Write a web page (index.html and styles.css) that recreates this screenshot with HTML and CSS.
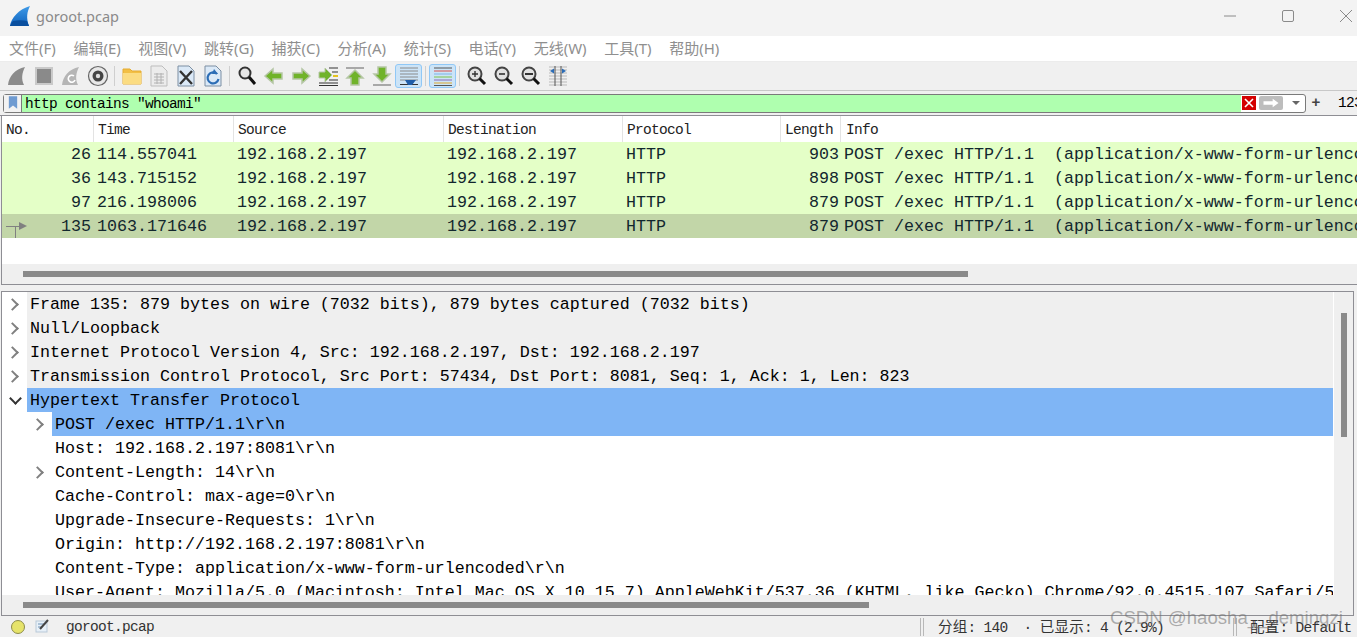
FILE: index.html
```html
<!DOCTYPE html>
<html lang="zh">
<head>
<meta charset="utf-8">
<title>goroot.pcap</title>
<link rel="stylesheet" href="styles.css">
</head>
<body>
<div class="window">
  <header class="titlebar">
    <svg class="logo" viewBox="0 0 20 20"><defs><linearGradient id="fin" x1="0" y1="0" x2="0" y2="1"><stop offset="0" stop-color="#3f9be8"/><stop offset="1" stop-color="#0f62bd"/></linearGradient></defs><path d="M0 20C1 12 9 3 20 0C17 6 16 12 19 20Z" fill="url(#fin)"/><path d="M0 20C1 18 2 16 3 15C8 14 13 14 17 15L19 20Z" fill="#0a4f9f"/></svg>
    <span class="title">goroot.pcap</span>
    <div class="winctl">
      <svg class="ctl" viewBox="0 0 12 12"><path d="M0 6H12" stroke="#8a8a8a" fill="none"/></svg>
      <svg class="ctl" viewBox="0 0 12 12"><rect x=".5" y=".5" width="11" height="11" rx="1.5" stroke="#8a8a8a" fill="none"/></svg>
      <svg class="ctl" viewBox="0 0 12 12"><path d="M0 0L12 12M12 0L0 12" stroke="#8a8a8a" fill="none"/></svg>
    </div>
  </header>
  <nav class="menubar">
    <span>文件(F)</span><span>编辑(E)</span><span>视图(V)</span><span>跳转(G)</span><span>捕获(C)</span><span>分析(A)</span><span>统计(S)</span><span>电话(Y)</span><span>无线(W)</span><span>工具(T)</span><span>帮助(H)</span>
  </nav>
  <div class="toolbar">
    <i class="tb"><svg viewBox="0 0 22 22"><path d="M2 20C3 11 9 4 19 2C16 8 15 14 18 20Z" fill="#8b8b8b"/></svg></i>
    <i class="tb"><svg viewBox="0 0 22 22"><rect x="3" y="3" width="16" height="16" fill="#8a8a8a" stroke="#c9c9c9" stroke-width="2"/></svg></i>
    <i class="tb"><svg viewBox="0 0 22 22"><path d="M2 20C3 11 9 4 19 2C16 8 15 14 18 20Z" fill="#b5b5b5"/><path d="M14 11a3.5 3.5 0 1 0 1 4" fill="none" stroke="#fff" stroke-width="1.6"/></svg></i>
    <i class="tb"><svg viewBox="0 0 22 22"><circle cx="11" cy="11" r="9.5" fill="#e8e8e8" stroke="#666" stroke-width="1.2"/><circle cx="11" cy="11" r="5.5" fill="#444"/><circle cx="11" cy="11" r="2.2" fill="#ddd"/></svg></i>
    <b class="sep"></b>
    <i class="tb"><svg viewBox="0 0 22 22"><path d="M2 4H9L11 6H20V19H2Z" fill="#f2bf45" stroke="#e5ac33"/><path d="M2 8H20V19H2Z" fill="#fbdc82"/></svg></i>
    <i class="tb"><svg viewBox="0 0 22 22"><path d="M3 1H14L19 6V21H3Z" fill="#ececec" stroke="#bdbdbd"/><path d="M6 9H16M6 12H16M6 15H16M6 18H16M9 8V19M13 8V19" stroke="#b2b2b2" fill="none"/></svg></i>
    <i class="tb"><svg viewBox="0 0 22 22"><path d="M3 1H14L19 6V21H3Z" fill="#dbe9f7" stroke="#7c8fa3"/><path d="M5 6L17 19M17 6L5 19" stroke="#333" stroke-width="2.4" fill="none"/></svg></i>
    <i class="tb"><svg viewBox="0 0 22 22"><path d="M3 1H14L19 6V21H3Z" fill="#dbe9f7" stroke="#7c8fa3"/><path d="M15 9A5.5 5.5 0 1 0 16.500 14" fill="none" stroke="#2c6db5" stroke-width="2.2"/><path d="M12 4L16 9L10 9Z" fill="#2c6db5"/></svg></i>
    <b class="sep"></b>
    <i class="tb"><svg viewBox="0 0 22 22"><circle cx="9" cy="8" r="5.5" fill="#e6e6e6" stroke="#333" stroke-width="2"/><path d="M13 12L19 19" stroke="#111" stroke-width="3" fill="none"/></svg></i>
    <i class="tb"><svg viewBox="0 0 22 22"><path d="M2 11L10 4V8H19V14H10V18Z" fill="#70b32a" stroke="#b5c6a5" stroke-width="1.5"/></svg></i>
    <i class="tb"><svg viewBox="0 0 22 22"><path d="M20 11L12 4V8H3V14H12V18Z" fill="#70b32a" stroke="#b5c6a5" stroke-width="1.5"/></svg></i>
    <i class="tb"><svg viewBox="0 0 22 22"><path d="M12 3H21M15 7H21M12 15H21M2 18H21M2 20.500H21" stroke="#333" fill="none"/><path d="M15 10L8 3V7H2V13H8V17Z" fill="#70b32a" stroke="#b5c6a5"/><path d="M16 11H21" stroke="#e5c21f" stroke-width="2"/></svg></i>
    <i class="tb"><svg viewBox="0 0 22 22"><path d="M2 3H20" stroke="#a8a8a8" stroke-width="2"/><path d="M11 5L19 13H15V20H7V13H3Z" fill="#70b32a" stroke="#b5c6a5" stroke-width="1.5"/></svg></i>
    <i class="tb"><svg viewBox="0 0 22 22"><path d="M2 20H20" stroke="#a8a8a8" stroke-width="2"/><path d="M11 17L19 9H15V2H7V9H3Z" fill="#70b32a" stroke="#b5c6a5" stroke-width="1.5"/></svg></i>
    <i class="tb on"><svg viewBox="0 0 22 22"><path d="M2 3H20M2 6H20M2 9H20M2 12H20M2 15H20" stroke="#8a8a8a" fill="none"/><path d="M2 19.500H20" stroke="#333" fill="none"/><path d="M7 15H18L14 20H10Z" fill="#1f5da8"/></svg></i>
    <b class="sep"></b>
    <i class="tb on"><svg viewBox="0 0 22 22"><path d="M2 3H20" stroke="#555"/><path d="M2 6H20" stroke="#d9534f"/><path d="M2 9H20" stroke="#7db4e6"/><path d="M2 12H20" stroke="#7fc24b"/><path d="M2 15H20" stroke="#8a6bb5"/><path d="M2 18H20" stroke="#e0a92f"/><path d="M2 20.500H20" stroke="#555"/></svg></i>
    <b class="sep"></b>
    <i class="tb"><svg viewBox="0 0 22 22"><circle cx="9" cy="9" r="6.500" fill="#e2e2e2" stroke="#444" stroke-width="2"/><path d="M6 9H12M9 6V12" stroke="#333" stroke-width="1.4"/><path d="M13.500 13.500L19 19" stroke="#111" stroke-width="3"/></svg></i>
    <i class="tb"><svg viewBox="0 0 22 22"><circle cx="9" cy="9" r="6.500" fill="#e2e2e2" stroke="#444" stroke-width="2"/><path d="M6 9H12" stroke="#333" stroke-width="1.6"/><path d="M13.500 13.500L19 19" stroke="#111" stroke-width="3"/></svg></i>
    <i class="tb"><svg viewBox="0 0 22 22"><circle cx="9" cy="9" r="6.500" fill="#e2e2e2" stroke="#444" stroke-width="2"/><path d="M5 8H13V10H5Z" fill="#333"/><path d="M13.500 13.500L19 19" stroke="#111" stroke-width="3"/></svg></i>
    <i class="tb"><svg viewBox="0 0 22 22"><path d="M2 2H20M2 5H20M2 8H20M2 11H20M2 14H20M2 17H20M2 20H20" stroke="#b9b9b9"/><path d="M8 1V21M14 1V21" stroke="#555" fill="none"/><path d="M3 6L7 3.500V8.500ZM19 6L15 3.500V8.500Z" fill="#2a6cb8"/></svg></i>
  </div>
  <div class="filterbar">
    <div class="filter">
      <span class="bookmark"><svg viewBox="0 0 12 16"><path d="M1 0H11V15L6 11L1 15Z" fill="#6f9bd1"/></svg></span>
      <span class="expr">http contains "whoami"</span>
      <span class="clear"><svg viewBox="0 0 14 14"><path d="M3 3L11 11M11 3L3 11" stroke="#fff" stroke-width="1.6"/></svg></span>
      <span class="apply"><svg viewBox="0 0 20 12"><path d="M1 4H12V1L19 6L12 11V8H1Z" fill="#fff"/></svg></span>
      <span class="drop"></span>
    </div>
    <span class="plus">+</span>
    <span class="btn123">123</span>
  </div>

  <section class="packets">
    <div class="phead">
      <span class="c1">No.</span><span class="c2">Time</span><span class="c3">Source</span><span class="c4">Destination</span><span class="c5">Protocol</span><span class="c6">Length</span><span class="c7">Info</span>
    </div>
    <div class="prow"><span class="c1">26</span><span class="c2">114.557041</span><span class="c3">192.168.2.197</span><span class="c4">192.168.2.197</span><span class="c5">HTTP</span><span class="c6">903</span><span class="c7">POST /exec HTTP/1.1  (application/x-www-form-urlencoded)</span></div>
    <div class="prow"><span class="c1">36</span><span class="c2">143.715152</span><span class="c3">192.168.2.197</span><span class="c4">192.168.2.197</span><span class="c5">HTTP</span><span class="c6">898</span><span class="c7">POST /exec HTTP/1.1  (application/x-www-form-urlencoded)</span></div>
    <div class="prow"><span class="c1">97</span><span class="c2">216.198006</span><span class="c3">192.168.2.197</span><span class="c4">192.168.2.197</span><span class="c5">HTTP</span><span class="c6">879</span><span class="c7">POST /exec HTTP/1.1  (application/x-www-form-urlencoded)</span></div>
    <div class="prow sel"><svg class="rel" viewBox="0 0 24 24"><path d="M2 12.500H16M11.500 13V24" stroke="#808080" fill="none"/><path d="M15 8L23 12L15 16Z" fill="#808080"/></svg><span class="c1">135</span><span class="c2">1063.171646</span><span class="c3">192.168.2.197</span><span class="c4">192.168.2.197</span><span class="c5">HTTP</span><span class="c6">879</span><span class="c7">POST /exec HTTP/1.1  (application/x-www-form-urlencoded)</span></div>
    <div class="pfill"></div>
    <div class="hscroll"><span class="thumb t1"></span></div>
  </section>

  <section class="details">
    <div class="dbody">
      <div class="tree">
        <div class="node grey"><i class="arrow"></i><span class="lab">Frame 135: 879 bytes on wire (7032 bits), 879 bytes captured (7032 bits)</span></div>
        <div class="node grey"><i class="arrow"></i><span class="lab">Null/Loopback</span></div>
        <div class="node grey"><i class="arrow"></i><span class="lab">Internet Protocol Version 4, Src: 192.168.2.197, Dst: 192.168.2.197</span></div>
        <div class="node grey"><i class="arrow"></i><span class="lab">Transmission Control Protocol, Src Port: 57434, Dst Port: 8081, Seq: 1, Ack: 1, Len: 823</span></div>
        <div class="node hl"><i class="arrow open"></i><span class="lab">Hypertext Transfer Protocol</span></div>
        <div class="node sub hl"><i class="arrow"></i><span class="lab">POST /exec HTTP/1.1\r\n</span></div>
        <div class="node sub"><i class="noarrow"></i><span class="lab">Host: 192.168.2.197:8081\r\n</span></div>
        <div class="node sub"><i class="arrow"></i><span class="lab">Content-Length: 14\r\n</span></div>
        <div class="node sub"><i class="noarrow"></i><span class="lab">Cache-Control: max-age=0\r\n</span></div>
        <div class="node sub"><i class="noarrow"></i><span class="lab">Upgrade-Insecure-Requests: 1\r\n</span></div>
        <div class="node sub"><i class="noarrow"></i><span class="lab">Origin: http://192.168.2.197:8081\r\n</span></div>
        <div class="node sub"><i class="noarrow"></i><span class="lab">Content-Type: application/x-www-form-urlencoded\r\n</span></div>
        <div class="node sub"><i class="noarrow"></i><span class="lab">User-Agent: Mozilla/5.0 (Macintosh; Intel Mac OS X 10_15_7) AppleWebKit/537.36 (KHTML, like Gecko) Chrome/92.0.4515.107 Safari/537.36\r\n</span></div>
      </div>
      <div class="vscroll"><span class="vthumb"></span></div>
    </div>
    <div class="hscroll dh"><span class="thumb t2"></span></div>
  </section>

  <footer class="status">
    <span class="led"></span>
    <svg class="note" viewBox="0 0 14 14"><rect x="1" y="2" width="11" height="11" fill="#e7f0f8" stroke="#b9c9d8"/><path d="M3 5H9M3 8H7" stroke="#6f92b5"/><path d="M5 10L13 1" stroke="#444" stroke-width="2"/></svg>
    <span class="sfile">goroot.pcap</span>
    <span class="grip"></span>
    <span class="stats"><span class="cj">分组</span>: 140  · <span class="cj">已显示</span>: 4 (2.9%)</span>
    <span class="grip"></span>
    <span class="profile"><span class="cj">配置</span>: Default</span>
  </footer>
  <div class="watermark">CSDN @haosha__demingzi</div>
</div>
</body>
</html>
```
FILE: styles.css
```css
* { box-sizing: border-box; }
html, body { margin: 0; padding: 0; height: 100%; overflow: hidden; background: #f0f0f0; }
.window {
  position: relative;
  width: 1357px;
  height: 637px;
  overflow: hidden;
  display: flex;
  flex-direction: column;
  font-family: "Liberation Mono", "Noto Sans CJK SC", monospace;
  color: #000;
}
.titlebar {
  height: 36px;
  flex: none;
  display: flex;
  align-items: center;
  padding: 0 0 4px 10px;
  background: #f3f3f3;
}
.logo { width: 20px; height: 20px; margin-right: 6px; }
.title { font: 14.5px "Noto Sans", sans-serif; color: #8a8a8a; }
.winctl { margin-left: auto; display: flex; gap: 46px; padding-right: 5px; }
.ctl { width: 12px; height: 12px; display: block; }
.menubar {
  height: 26px;
  flex: none;
  display: flex;
  align-items: center;
  gap: 17.6px;
  padding: 0 0 3px 9px;
  background: #fff;
  border-bottom: 1px solid #ececec;
  font: 15px "Noto Sans", "Noto Sans CJK SC", sans-serif;
  color: #8f8f8f;
}
.toolbar {
  height: 28px;
  flex: none;
  display: flex;
  align-items: center;
  padding-left: 3px;
  background: #f0f0f0;
}
.tb {
  width: 27px;
  height: 24px;
  flex: none;
  display: flex;
  align-items: center;
  justify-content: center;
  border: 1px solid transparent;
  border-radius: 3px;
}
.tb svg { width: 22px; height: 22px; display: block; }
.tb.on { background: #cce4f7; border-color: #90c8f6; }
.sep { width: 1px; height: 20px; margin: 0 3px; background: #cfcfcf; flex: none; }
.filterbar {
  height: 26px;
  flex: none;
  display: flex;
  align-items: center;
  padding: 0 0 0 3px;
  background: #f0f0f0;
  border-top: 1px solid #c8c8c8;
  border-bottom: 1px solid #8e8e94;
  overflow: hidden;
}
.filter {
  width: 1303px;
  height: 19px;
  flex: none;
  display: flex;
  align-items: center;
  border: 1px solid #7a7a7a;
  border-radius: 3px;
  background: #fff;
}
.bookmark { width: 18px; height: 17px; border-right: 1px solid #7a7a7a; display: flex; align-items: center; justify-content: center; flex: none; background: #f2f2f2; }
.bookmark svg { width: 10px; height: 14px; }
.expr {
  flex: 1;
  height: 17px;
  padding-left: 3px;
  background: #afffaf;
  font-size: 14.5px;
  letter-spacing: -0.7px;
  line-height: 18px;
}
.clear { width: 14px; height: 14px; margin: 0 3px 0 1px; background: #d40000; flex: none; }
.clear svg { width: 14px; height: 14px; display: block; }
.apply { width: 24px; height: 14px; border-radius: 2px; background: #bdbdbd; display: flex; align-items: center; justify-content: center; flex: none; }
.apply svg { width: 18px; height: 10px; }
.drop {
  width: 0;
  height: 0;
  margin: 0 5px 0 9px;
  flex: none;
  border-left: 4px solid transparent;
  border-right: 4px solid transparent;
  border-top: 4px solid #666;
}
.plus { width: 26px; text-align: center; flex: none; font: bold 15px/20px "Liberation Sans", sans-serif; color: #444; margin: -2px 0 0 -3px; }
.btn123 { margin-left: 9px; font-size: 14.5px; letter-spacing: -0.7px; flex: none; }

.packets {
  height: 169px;
  flex: none;
  display: flex;
  flex-direction: column;
  border-left: 1px solid #8e8e94;
  margin-left: 1px;
  border-bottom: 1px solid #8e8e94;
  background: #fff;
}
.phead {
  height: 26px;
  flex: none;
  display: flex;
  align-items: center;
  background: #fff;
  font-size: 14.5px;
  letter-spacing: -0.7px;
  color: #222;
}
.phead span { height: 26px; line-height: 29px; padding-left: 4px; border-right: 1px solid #e3e3e3; }
.phead .c7 { border-right: 0; padding-left: 5px; }
.c1 { width: 92px; flex: none; }
.c2 { width: 140px; flex: none; }
.c3 { width: 210px; flex: none; }
.c4 { width: 179px; flex: none; }
.c5 { width: 158px; flex: none; }
.c6 { width: 60px; flex: none; }
.c7 { flex: none; white-space: pre; }
.prow {
  position: relative;
  height: 24px;
  flex: none;
  display: flex;
  align-items: center;
  background: #e4ffc7;
  color: #12272e;
  font-size: 16.67px;
  line-height: 25px;
  white-space: pre;
  overflow: hidden;
}
.prow .c1, .prow .c6 { text-align: right; padding-right: 3px; }
.prow .c6 { padding-right: 2px; }
.prow .c3, .prow .c4, .prow .c5 { padding-left: 3px; }
.prow .c2 { padding-left: 3px; }
.prow .c7 { padding-left: 3px; }
.prow.sel { background: #c2d6a8; }
.rel { position: absolute; left: 2px; top: 0; width: 24px; height: 24px; }
.pfill { height: 26px; flex: none; background: #fff; }
.hscroll { height: 20px; flex: none; background: #efefef; display: flex; align-items: center; padding-left: 21px; }
.thumb { display: block; height: 6px; background: #8a8a8a; }
.t1 { width: 945px; }
.t2 { width: 846px; }

.details {
  height: 325px;
  flex: none;
  margin: 6px 3px 0 1px;
  display: flex;
  flex-direction: column;
  border: 1px solid #8e8e94;
  background: #fff;
}
.dbody { height: 303px; flex: none; display: flex; overflow: hidden; }
.tree { flex: none; width: 1331px; overflow: hidden; margin-right: 1px; }
.node {
  height: 24px;
  display: flex;
  align-items: stretch;
  font-size: 16.67px;
  line-height: 26px;
  color: #000;
}
.arrow, .noarrow { width: 25px; flex: none; position: relative; background: #fff; }
.arrow::before {
  content: "";
  position: absolute;
  left: 6px;
  top: 8px;
  width: 7px;
  height: 7px;
  border-top: 2px solid #808080;
  border-right: 2px solid #808080;
  transform: rotate(45deg);
}
.arrow.open::before { left: 9px; top: 6px; border-color: #333; transform: rotate(135deg); }
.lab { flex: 1; padding-left: 3px; white-space: pre; }
.grey .lab { background: #efefef; }
.hl .lab { background: #7fb5f5; }
.sub { padding-left: 25px; }
.node.sub.hl { background: #fff; }
.vscroll { width: 19px; flex: none; background: #efefef; position: relative; padding: 21px 6px 0 7px; }
.vthumb { display: block; width: 6px; height: 124px; background: #8a8a8a; }
.dh { height: 20px; }

.status {
  height: 22px;
  flex: none;
  display: flex;
  align-items: center;
  padding-left: 11px;
  background: #f0f0f0;
  font-size: 14.5px;
  letter-spacing: -0.7px;
  line-height: 25px;
  color: #333;
  white-space: pre;
}
.led { width: 14px; height: 14px; border-radius: 50%; background: #e6e36a; border: 1px solid #8c8c4a; flex: none; }
.note { width: 14px; height: 14px; margin-left: 10px; flex: none; margin-top: -3px; }
.sfile { margin-left: 17px; width: 854px; flex: none; }
.grip { width: 4px; height: 18px; border-left: 1px solid #b8b8b8; border-right: 1px solid #b8b8b8; flex: none; }
.stats { margin-left: 14px; width: 295px; flex: none; }
.profile { margin-left: 13px; }
.cj { font-family: "Noto Sans CJK SC", sans-serif; font-size: 14.5px; letter-spacing: 0.3px; }
.watermark {
  position: absolute;
  left: 1110px;
  top: 607px;
  font: 18.6px "Liberation Sans", sans-serif;
  color: rgba(110, 110, 110, .55);
  white-space: nowrap;
}
```
